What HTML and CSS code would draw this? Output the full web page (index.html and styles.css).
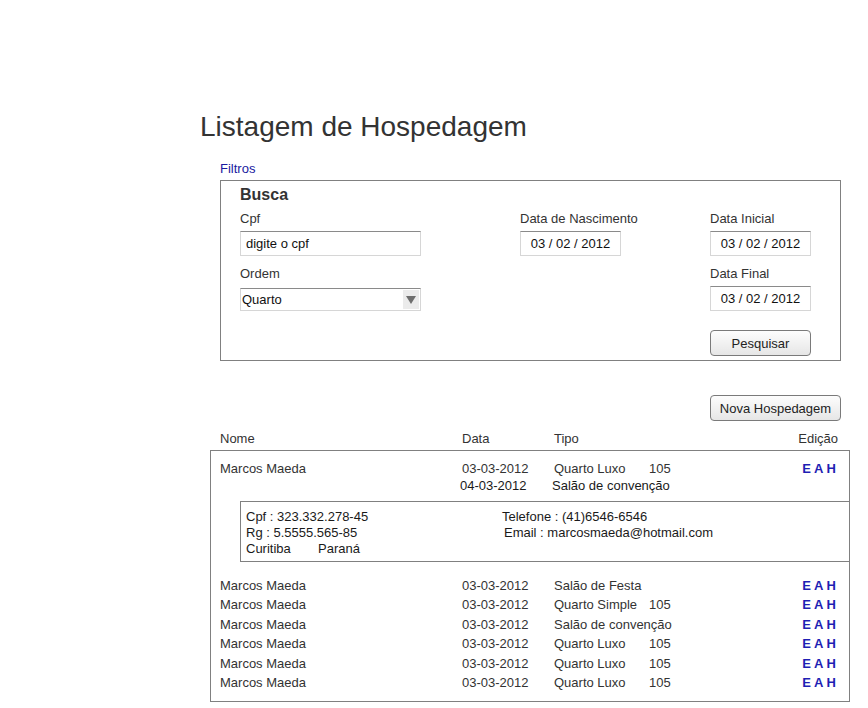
FILE: index.html
```html
<!DOCTYPE html>
<html lang="pt-BR">
<head>
<meta charset="utf-8">
<title>Listagem de Hospedagem</title>
<link rel="stylesheet" href="styles.css">
</head>
<body>
<div class="page">
  <h1 class="title">Listagem de Hospedagem</h1>
  <div class="filters-label">Filtros</div>
  <section class="filter-box">
    <h2 class="busca">Busca</h2>
    <div class="filter-grid">
      <div class="lbl">Cpf</div>
      <div class="lbl">Data de Nascimento</div>
      <div class="lbl">Data Inicial</div>

      <div class="field text-input">digite o cpf</div>
      <div class="field date-input">03 / 02 / 2012</div>
      <div class="field date-input">03 / 02 / 2012</div>

      <div class="lbl row3">Ordem</div>
      <div class="row3"></div>
      <div class="lbl row3">Data Final</div>

      <div class="select row4">
        <span class="select-text">Quarto</span>
        <span class="select-arrow"><span class="tri"></span></span>
      </div>
      <div class="row4"></div>
      <div class="field date-input row4">03 / 02 / 2012</div>

      <div class="row5"></div>
      <div class="row5"></div>
      <button class="btn btn-search row5">Pesquisar</button>
    </div>
  </section>

  <div class="actions">
    <button class="btn btn-new">Nova Hospedagem</button>
  </div>

  <div class="list-header cols">
    <span>Nome</span>
    <span>Data</span>
    <span>Tipo</span>
    <span></span>
    <span class="edit-head">Edição</span>
  </div>

  <div class="list-box">
    <div class="entry-main">
      <div class="cols line17">
        <span>Marcos Maeda</span>
        <span>03-03-2012</span>
        <span>Quarto Luxo</span>
        <span>105</span>
        <span class="eah">E A H</span>
      </div>
      <div class="cols line17 dark">
        <span></span>
        <span class="shift">04-03-2012</span>
        <span class="shift">Salão de convenção</span>
        <span></span>
        <span></span>
      </div>
    </div>

    <div class="detail">
      <div class="detail-grid">
        <span>Cpf : 323.332.278-45</span>
        <span>Telefone : (41)6546-6546</span>
        <span>Rg : 5.5555.565-85</span>
        <span class="email">Email : marcosmaeda@hotmail.com</span>
        <span><span class="city">Curitiba</span>Paraná</span>
        <span></span>
      </div>
    </div>

    <div class="rows">
      <div class="cols row"><span>Marcos Maeda</span><span>03-03-2012</span><span>Salão de Festa</span><span></span><span class="eah">E A H</span></div>
      <div class="cols row"><span>Marcos Maeda</span><span>03-03-2012</span><span>Quarto Simple</span><span>105</span><span class="eah">E A H</span></div>
      <div class="cols row"><span>Marcos Maeda</span><span>03-03-2012</span><span>Salão de convenção</span><span></span><span class="eah">E A H</span></div>
      <div class="cols row"><span>Marcos Maeda</span><span>03-03-2012</span><span>Quarto Luxo</span><span>105</span><span class="eah">E A H</span></div>
      <div class="cols row"><span>Marcos Maeda</span><span>03-03-2012</span><span>Quarto Luxo</span><span>105</span><span class="eah">E A H</span></div>
      <div class="cols row"><span>Marcos Maeda</span><span>03-03-2012</span><span>Quarto Luxo</span><span>105</span><span class="eah">E A H</span></div>
    </div>
  </div>
</div>
</body>
</html>
```
FILE: styles.css
```css
* { box-sizing: border-box; }

html, body {
  margin: 0;
  padding: 0;
  background: #ffffff;
}

body {
  font-family: "Liberation Sans", Arial, sans-serif;
  font-size: 13px;
  color: #333333;
}

.page {
  margin-left: 200px;
  width: 650px;
  padding-top: 111px;
}

.title {
  margin: 0;
  font-size: 28px;
  line-height: 32px;
  font-weight: normal;
  color: #333333;
}

.filters-label {
  margin: 18px 0 3px 20px;
  line-height: 16px;
  color: #1a1aa0;
}

.filter-box {
  margin-left: 20px;
  width: 621px;
  border: 1px solid #808080;
  padding: 4px 0 4px 19px;
}

.busca {
  margin: 0;
  font-size: 16px;
  line-height: 20px;
  font-weight: bold;
  color: #333333;
}

.filter-grid {
  margin-top: 5px;
  display: grid;
  grid-template-columns: 280px 190px 101px;
  align-items: start;
}

.lbl {
  line-height: 17px;
  color: #333333;
}

.field {
  margin-top: 4px;
  height: 25px;
  border: 1px solid #d6d6d6;
  border-top-color: #8a8a8a;
  background: #ffffff;
  color: #111111;
  line-height: 23px;
  white-space: nowrap;
}

.text-input {
  width: 181px;
  padding-left: 5px;
}

.date-input {
  width: 101px;
  text-align: center;
}

.row3 { margin-top: 9px; }
.row4 { margin-top: 4px; }
.row5 { margin-top: 19px; }

.select {
  margin-top: 6px;
  width: 181px;
  height: 23px;
  display: flex;
  align-items: stretch;
  border: 1px solid #d6d6d6;
  border-top-color: #8a8a8a;
  color: #111111;
}

.select-text {
  flex: 1;
  padding-left: 1px;
  line-height: 21px;
}

.select-arrow {
  width: 16px;
  margin: 1px 1px 1px 0;
  background: #ebebeb;
  display: flex;
  align-items: center;
  justify-content: center;
}

.tri {
  width: 0;
  height: 0;
  border-left: 5px solid transparent;
  border-right: 5px solid transparent;
  border-top: 8px solid #6e6e6e;
}

.btn {
  font-family: "Liberation Sans", Arial, sans-serif;
  font-size: 13px;
  color: #222222;
  height: 26px;
  padding: 0;
  border: 1px solid #7a7a7a;
  border-radius: 4px;
  background: linear-gradient(#fdfdfd, #e6e6e6);
}

.btn-search { width: 101px; }

.actions {
  margin: 34px 0 0 20px;
  width: 621px;
  display: flex;
  justify-content: flex-end;
}

.btn-new { width: 131px; }

.cols {
  display: grid;
  grid-template-columns: 242px 92px 95px 1fr auto;
  white-space: nowrap;
}

.list-header {
  margin: 10px 0 0 10px;
  width: 640px;
  padding: 0 12px 0 10px;
  line-height: 16px;
  color: #333333;
}

.edit-head { text-align: right; }

.list-box {
  margin: 3px 0 0 10px;
  width: 640px;
  border: 1px solid #808080;
  padding: 9px 0 8px 0;
}

.entry-main .cols,
.rows .cols {
  padding: 0 13px 0 9px;
}

.line17 { line-height: 17px; }

.dark { color: #1a1a1a; }

.shift { margin-left: -2px; }

.eah {
  font-weight: bold;
  color: #1f1fb4;
  text-align: right;
}

.detail {
  margin: 7px -1px 0 29px;
  border: 1px solid #808080;
  padding: 7px 5px 4px 5px;
  color: #1a1a1a;
}

.detail-grid {
  display: grid;
  grid-template-columns: 256px 1fr;
  line-height: 16px;
  white-space: nowrap;
}

.email { margin-left: 2px; }

.city {
  display: inline-block;
  width: 72px;
}

.rows { margin-top: 13.5px; }

.row { line-height: 19.5px; }
```
